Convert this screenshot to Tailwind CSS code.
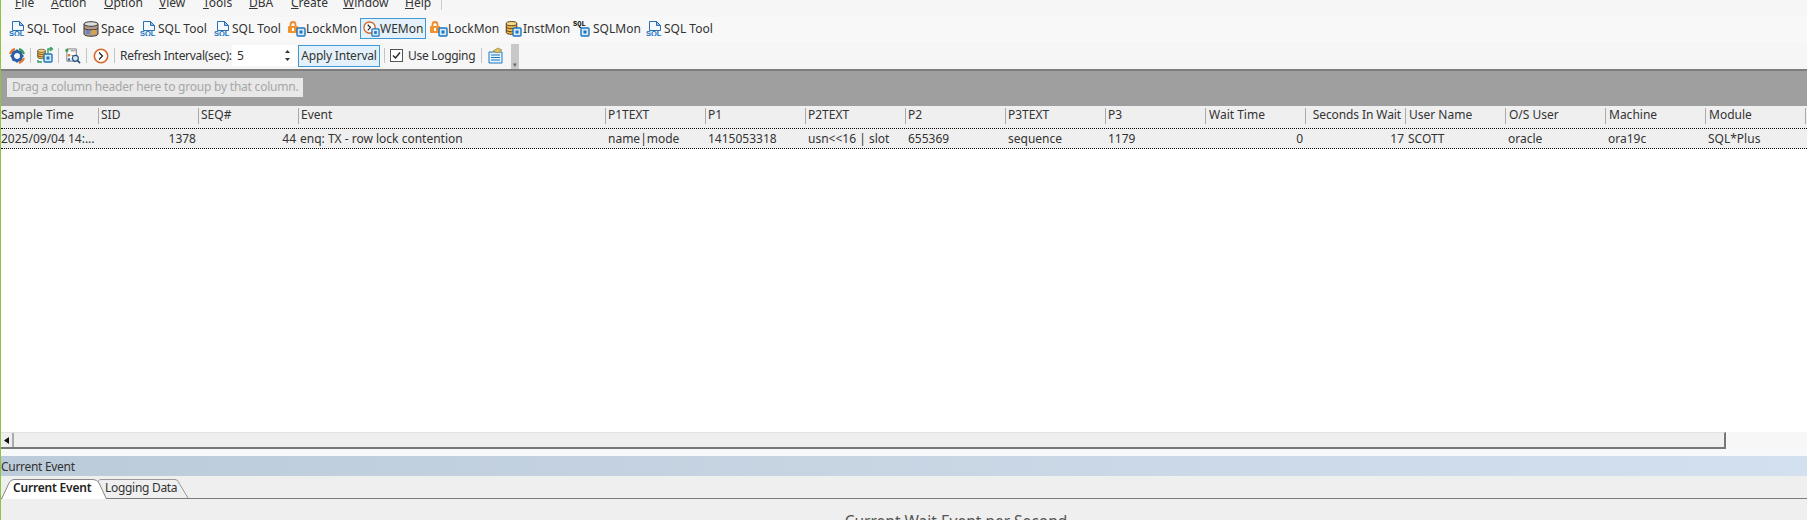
<!DOCTYPE html>
<html lang="en">
<head>
  <meta charset="UTF-8" />
  <title>WEMon</title>
  <script src="https://cdn.jsdelivr.net/npm/@tailwindcss/browser@4"></script>
</head>
<body class="w-[1807px] h-[520px] overflow-hidden bg-white text-[12px] text-[#222] whitespace-nowrap font-['Noto_Sans','Noto_Sans_CJK_KR',sans-serif]">
  <svg class="hidden">
    <defs>
      <symbol id="sql" viewBox="0 0 16 15">
        <path d="M3.500.5h7l4 4v5h-11z" fill="#f4f9fd" stroke="#2a6fb0"/>
        <path d="M10.500.5v4h4z" fill="#8fc0e8" stroke="#2a6fb0"/>
        <text x="0" y="15" font-size="7.500" font-weight="700" fill="#1273c4" font-family="Liberation Sans">SQL</text>
      </symbol>
      <symbol id="mon" viewBox="0 0 10 10">
        <rect x="1" y="1" width="8" height="8" rx="1" fill="#d6eafa" stroke="#1c76c0" stroke-width="1.400"/>
        <rect x="3.500" y="3.500" width="3" height="3" fill="#1c76c0"/>
      </symbol>
      <symbol id="lock" viewBox="0 0 10 12">
        <path d="M2.500 6V3.500a2.500 2.500 0 0 1 5 0V6" fill="none" stroke="#ee8c2c" stroke-width="1.800"/>
        <rect x="0" y="5" width="10" height="7" rx="1" fill="#f0922f"/>
        <rect x="4" y="7" width="2" height="3" fill="#fff"/>
      </symbol>
      <symbol id="db" viewBox="0 0 14 16">
        <path d="M1 3v10c0 3 12 3 12 0V3z" fill="#f2b84b" stroke="#3a2d14"/>
        <ellipse cx="7" cy="3" rx="6" ry="2.400" fill="#f8d98a" stroke="#3a2d14"/>
        <path d="M1 6.500c0 3 12 3 12 0M1 10c0 3 12 3 12 0" fill="none" stroke="#3a2d14"/>
      </symbol>
    </defs>
  </svg>

  <div class="flex h-[520px]">
    <div class="w-[1px] shrink-0 bg-[#8cc63f]"></div>
    <div class="flex-1 min-w-0 flex flex-col">

      <!-- menu, clipped by the top of the capture -->
      <div class="h-[17px] shrink-0 bg-[#f6f6f6] overflow-hidden relative">
        <div class="flex -mt-[6px] h-[18px] items-center text-[#333] leading-[18px]">
          <span class="ml-[14px] w-[36px]"><u>F</u>ile</span>
          <span class="w-[53px]"><u>A</u>ction</span>
          <span class="w-[55px]"><u>O</u>ption</span>
          <span class="w-[44px]"><u>V</u>iew</span>
          <span class="w-[46px]"><u>T</u>ools</span>
          <span class="w-[42px]"><u>D</u>BA</span>
          <span class="w-[52px]"><u>C</u>reate</span>
          <span class="w-[62px]"><u>W</u>indow</span>
          <span class="w-[36px]"><u>H</u>elp</span>
          <span class="w-px h-[14px] bg-[#ccc]"></span>
        </div>
      </div>

      <!-- window toolbar -->
      <div class="h-[25px] shrink-0 bg-[#f8f8f8] flex items-center pl-[8px] pb-[2px] text-[#333]">
        <div class="flex items-center w-[74px]"><svg class="w-[16px] h-[15px] mr-[2px]"><use href="#sql"/></svg>SQL Tool</div>
        <div class="flex items-center w-[57px]">
          <svg class="w-[16px] h-[16px] mr-[2px]" viewBox="0 0 16 16"><path d="M1 3v10c0 3 14 3 14 0V3z" fill="#b59a8a" stroke="#3b3b3b"/><ellipse cx="8" cy="3" rx="7" ry="2.300" fill="#ddd" stroke="#3b3b3b"/><path d="M1 7c0 2.500 14 2.500 14 0" fill="none" stroke="#3b3b3b"/><rect x="3" y="9" width="4" height="4" fill="#6a86c0"/><rect x="9" y="9" width="4" height="4" fill="#d9a441"/></svg>Space
        </div>
        <div class="flex items-center w-[74px]"><svg class="w-[16px] h-[15px] mr-[2px]"><use href="#sql"/></svg>SQL Tool</div>
        <div class="flex items-center w-[74px]"><svg class="w-[16px] h-[15px] mr-[2px]"><use href="#sql"/></svg>SQL Tool</div>
        <div class="flex items-center w-[72px] h-[16px] relative pl-[18px]"><svg class="absolute left-0 top-0 w-[10px] h-[12px]"><use href="#lock"/></svg><svg class="absolute left-[8px] top-[6px] w-[10px] h-[10px]"><use href="#mon"/></svg>LockMon</div>
        <div class="flex items-center w-[66px] h-[21px] border border-[#3f9ad6] bg-[#e4f1fa] pl-[19px] relative">
          <svg class="absolute left-[2px] top-[2px] w-[15px] h-[15px]" viewBox="0 0 16 16"><circle cx="7" cy="7" r="6" fill="#fff" stroke="#d9662a" stroke-width="1.500"/><path d="M5 4l3 3-3 3" fill="none" stroke="#222" stroke-width="1.200"/></svg>
          <svg class="absolute left-[10px] top-[9px] w-[9px] h-[9px]"><use href="#mon"/></svg>WEMon
        </div>
        <div class="flex items-center w-[75px] h-[16px] relative pl-[18px] ml-[4px]"><svg class="absolute left-0 top-0 w-[10px] h-[12px]"><use href="#lock"/></svg><svg class="absolute left-[8px] top-[6px] w-[10px] h-[10px]"><use href="#mon"/></svg>LockMon</div>
        <div class="flex items-center w-[68px] h-[16px] relative pl-[18px]"><svg class="absolute left-0 top-0 w-[13px] h-[14px]"><use href="#db"/></svg><svg class="absolute left-[7px] top-[6px] w-[10px] h-[10px]"><use href="#mon"/></svg>InstMon</div>
        <div class="flex items-center w-[73px] h-[16px] relative pl-[20px]">
          <span class="absolute left-0 -top-[1px] text-[7px] leading-[8px] font-bold text-black font-['Liberation_Mono',monospace]">SQL</span>
          <svg class="absolute left-[7px] top-[6px] w-[10px] h-[10px]"><use href="#mon"/></svg>SQLMon
        </div>
        <div class="flex items-center"><svg class="w-[16px] h-[15px] mr-[2px]"><use href="#sql"/></svg>SQL Tool</div>
      </div>

      <!-- wemon toolbar -->
      <div class="h-[29px] shrink-0 bg-[#f6f6f6] border-b-[2px] border-[#7d7d7d] flex items-center pl-[8px] text-[#333]">
        <svg class="w-[16px] h-[16px]" viewBox="0 0 16 16">
          <circle cx="8" cy="8" r="4.500" fill="none" stroke="#2a5fa8" stroke-width="3"/>
          <path d="M8 1.500v2M8 12.500v2M1.500 8h2M12.500 8h2M3.500 3.500l1.500 1.500M11 11l1.500 1.500M12.500 3.500L11 5M3.500 12.500L5 11" stroke="#2a5fa8" stroke-width="2"/>
          <path d="M1 6a7.500 7.500 0 0 1 5-5" fill="none" stroke="#e8742a" stroke-width="2"/>
          <path d="M10 1a7.500 7.500 0 0 1 5 5" fill="none" stroke="#2e9e5a" stroke-width="2"/>
          <path d="M15 10a7.500 7.500 0 0 1-5 5" fill="none" stroke="#e8742a" stroke-width="2"/>
        </svg>
        <span class="w-px h-[15px] bg-[#c4c4c4] ml-[5px] mr-[6px]"></span>
        <div class="relative w-[16px] h-[17px]">
          <svg class="absolute left-0 top-0 w-[9px] h-[14px]"><use href="#db"/></svg>
          <svg class="absolute left-[10px] top-0 w-[6px] h-[7px]" viewBox="0 0 6 7"><path d="M1 6V2h3M3 0l2.500 2L3 4" fill="none" stroke="#2e9e5a" stroke-width="1.400"/></svg>
          <svg class="absolute left-0 top-[13px] w-[6px] h-[4px]" viewBox="0 0 6 4"><path d="M1 0v2h4" fill="none" stroke="#2e9e5a" stroke-width="1.400"/></svg>
          <svg class="absolute left-[6px] top-[6px] w-[10px] h-[10px]"><use href="#mon"/></svg>
        </div>
        <span class="w-px h-[15px] bg-[#c4c4c4] ml-[5px] mr-[6px]"></span>
        <svg class="w-[16px] h-[16px]" viewBox="0 0 17 17"><path d="M2 1h10v13H2z" fill="#fff" stroke="#777"/><rect x="0.500" y="1" width="3" height="3" fill="#3c9a4b"/><rect x="3" y="6.500" width="2.500" height="2.500" fill="#d9742a"/><rect x="3" y="11" width="2.500" height="2.500" fill="#2a6fb0"/><path d="M6 3h5M7 8h2M7 12h2" stroke="#777"/><circle cx="11" cy="11" r="3.200" fill="#cfe6f8" stroke="#2b4f78" stroke-width="1.200"/><path d="M13 13l3 3" stroke="#2b4f78" stroke-width="1.800"/></svg>
        <span class="w-px h-[15px] bg-[#c4c4c4] ml-[5px] mr-[6px]"></span>
        <svg class="w-[16px] h-[16px]" viewBox="0 0 16 16"><circle cx="8" cy="8" r="6.700" fill="#fff" stroke="#d9662a" stroke-width="1.600"/><path d="M6 4.500L9.500 8 6 11.500" fill="none" stroke="#222" stroke-width="1.200"/></svg>
        <span class="w-px h-[15px] bg-[#c4c4c4] ml-[5px] mr-[5px]"></span>
        <span class="w-[112px] tracking-[-0.3px]">Refresh Interval(sec):</span>
        <div class="w-[65px] h-[21px] bg-white flex items-center pl-[5px] mr-[1px] relative">5
          <svg class="absolute right-[6px] top-[4px] w-[7px] h-[13px]" viewBox="0 0 7 13"><path d="M3.500 1L6 4H1zM3.500 12L1 9h5z" fill="#333"/></svg>
        </div>
        <div class="w-[82px] h-[22px] border border-[#3f9ad6] bg-[#e4f1fa] flex items-center justify-center tracking-[-0.2px]">Apply Interval</div>
        <span class="w-px h-[15px] bg-[#c4c4c4] ml-[4px] mr-[5px]"></span>
        <span class="w-[13px] h-[13px] border border-[#555] bg-white flex items-center justify-center mr-[5px]">
          <svg class="w-[9px] h-[9px]" viewBox="0 0 9 9"><path d="M1 4.500L3.500 7 8 1.500" fill="none" stroke="#222" stroke-width="1.400"/></svg>
        </span>
        <span class="w-[68px] tracking-[-0.3px]">Use Logging</span>
        <span class="w-px h-[15px] bg-[#c4c4c4] ml-[5px] mr-[6px]"></span>
        <svg class="w-[16px] h-[17px]" viewBox="0 0 16 17"><path d="M1 5h13v11H1z" fill="#e8f3fb" stroke="#1c76c0"/><path d="M3 8h9M3 10.500h9M3 13h9" stroke="#1c76c0"/><path d="M5 4l5-3 4 2-4 3z" fill="#e3c25e" stroke="#8c7430" stroke-width=".6"/></svg>
        <div class="ml-[7px] w-[8px] h-[25px] bg-[#c8c8c8] self-end flex items-end justify-center"><span class="text-[7px] leading-[9px] text-[#666]">▾</span></div>
      </div>

      <!-- group by panel -->
      <div class="h-[35px] shrink-0 bg-[#9f9f9f] pt-[7px] pl-[6px]">
        <div class="inline-block h-[19px] leading-[18px] bg-[#e8e8e8] text-[#a6a6a6] px-[5px] tracking-[-0.22px]">Drag a column header here to group by that column.</div>
      </div>

      <!-- grid header -->
      <div class="h-[22px] shrink-0 bg-[#efefef] pt-[2px] grid grid-cols-[98px_100px_100px_307px_repeat(12,100px)] items-start leading-[14px] text-[#333]">
        <div class="h-[16px] border-r border-[#aaa]">Sample Time</div>
        <div class="h-[16px] border-r border-[#aaa] pl-[2px]">SID</div>
        <div class="h-[16px] border-r border-[#aaa] pl-[2px]">SEQ#</div>
        <div class="h-[16px] border-r border-[#aaa] pl-[2px]">Event</div>
        <div class="h-[16px] border-r border-[#aaa] pl-[2px]">P1TEXT</div>
        <div class="h-[16px] border-r border-[#aaa] pl-[2px]">P1</div>
        <div class="h-[16px] border-r border-[#aaa] pl-[2px]">P2TEXT</div>
        <div class="h-[16px] border-r border-[#aaa] pl-[2px]">P2</div>
        <div class="h-[16px] border-r border-[#aaa] pl-[2px]">P3TEXT</div>
        <div class="h-[16px] border-r border-[#aaa] pl-[2px]">P3</div>
        <div class="h-[16px] border-r border-[#aaa] pl-[3px]">Wait Time</div>
        <div class="h-[16px] border-r border-[#aaa] text-right pr-[4px] tracking-[-0.1px]">Seconds In Wait</div>
        <div class="h-[16px] border-r border-[#aaa] pl-[3px]">User Name</div>
        <div class="h-[16px] border-r border-[#aaa] pl-[3px]">O/S User</div>
        <div class="h-[16px] border-r border-[#aaa] pl-[3px]">Machine</div>
        <div class="h-[16px] border-r border-[#aaa] pl-[3px]">Module</div>
      </div>

      <!-- selected row -->
      <div class="h-[21px] shrink-0 bg-[#efefef] border-y border-dotted border-black grid grid-cols-[98px_100px_100px_307px_repeat(12,100px)] items-center leading-[18px] text-[#333]">
        <div>2025/09/04 14:...</div>
        <div class="text-right pr-[3px]">1378</div>
        <div class="text-right pr-[3px]">44</div>
        <div class="pl-[1px]">enq: TX - row lock contention</div>
        <div class="pl-[2px]">name|mode</div>
        <div class="pl-[2px]">1415053318</div>
        <div class="pl-[2px]">usn&lt;&lt;16 | slot</div>
        <div class="pl-[2px]">655369</div>
        <div class="pl-[2px]">sequence</div>
        <div class="pl-[2px]">1179</div>
        <div class="text-right pr-[3px]">0</div>
        <div class="text-right pr-[2px]">17</div>
        <div class="pl-[2px]">SCOTT</div>
        <div class="pl-[2px]">oracle</div>
        <div class="pl-[2px]">ora19c</div>
        <div class="pl-[2px]">SQL*Plus</div>
      </div>

      <div class="flex-1 min-h-0 bg-white"></div>

      <!-- scrollbar -->
      <div class="h-[17px] shrink-0 flex">
        <div class="w-[1725px] flex bg-[#efefef] border-t border-[#e2e2e2] border-b-[2px] border-b-[#777] border-r-[2px] border-r-[#777]">
          <div class="w-[13px] border-r-[2px] border-[#aaa] flex items-center justify-center">
            <svg class="w-[5px] h-[7px]" viewBox="0 0 5 7"><path d="M5 0v7L0 3.500z" fill="#111"/></svg>
          </div>
        </div>
        <div class="flex-1 bg-[#f7f7f7]"></div>
      </div>

      <div class="h-[7px] shrink-0 bg-[#f7f8fa]"></div>

      <!-- current event title -->
      <div class="h-[20px] shrink-0 bg-gradient-to-r from-[#bccbd9] to-[#d3e0ef] leading-[21px] text-[#333] tracking-[-0.3px]">Current Event</div>

      <!-- tabs -->
      <div class="h-[23px] shrink-0 bg-[#efefef] border-b border-[#7d7d7d] flex items-end text-[#333] relative">
        <svg class="absolute left-0 top-[3px] w-[190px] h-[20px] overflow-visible" viewBox="0 0 190 20" fill="none">
          <path d="M100 14L97 5Q96 1 100 0.500H174Q177 0.500 178 4L187 19" fill="#efefef" stroke="#999"/>
          <path d="M1 20L8 4Q9.500 .500 13 .500H92Q96 .500 98 4L105 20z" fill="#fff"/>
          <path d="M1 19L8 4Q9.500 .500 13 .500H92Q96 .500 98 4L105 19" stroke="#888"/>
        </svg>
        <span class="relative ml-[12px] w-[90px] leading-[20px] font-semibold text-[#222] tracking-[-0.2px]">Current Event</span>
        <span class="relative ml-[2px] leading-[20px] tracking-[-0.3px]">Logging Data</span>
      </div>

      <!-- chart title, cut off by the bottom of the capture -->
      <div class="flex-none h-[21px] bg-[#efefef] overflow-hidden text-center pl-[104px]">
        <div class="pt-[13px] text-[15.500px] leading-[18px] text-[#555]">Current Wait Event per Second</div>
      </div>
    </div>
  </div>
</body>
</html>
